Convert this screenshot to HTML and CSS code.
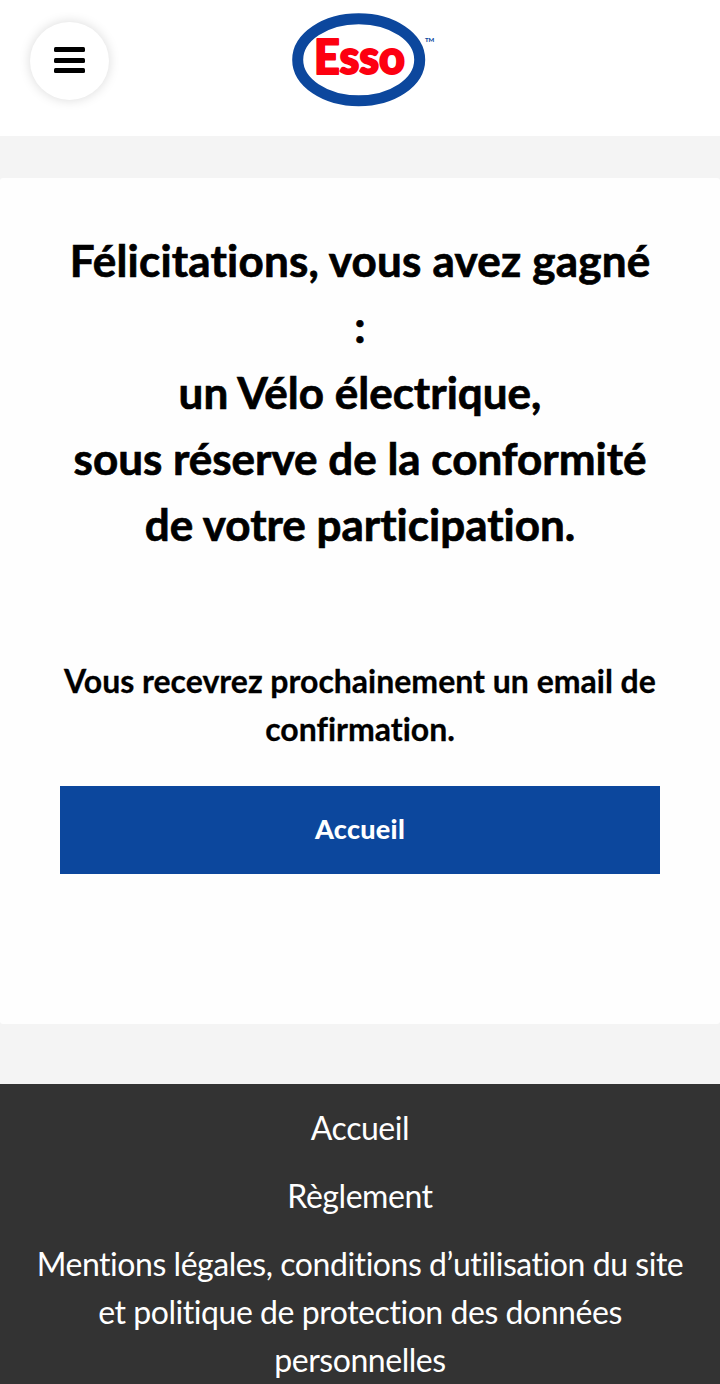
FILE: index.html
```
<!DOCTYPE html>
<html lang="fr">
<head>
    <meta charset="UTF-8">
    <meta name="viewport" content="width=device-width, initial-scale=1.0">
    <title>Esso</title>
    <link rel="stylesheet" href="styles.css">
</head>
<body>

<header class="header">
    <button class="menu-button" aria-label="Menu">
        <span class="bar"></span>
        <span class="bar"></span>
        <span class="bar"></span>
    </button>
    <svg class="logo" width="150" height="100" viewBox="0 0 150 100">
        <ellipse cx="73.7" cy="49.8" rx="61" ry="41" fill="#fff" stroke="#0c479d" stroke-width="11"/>
        <text class="logo-text" x="29" y="63.5" textLength="91" lengthAdjust="spacingAndGlyphs">Esso</text>
        <text class="logo-tm" x="140" y="32">TM</text>
    </svg>
</header>

<main class="content">
    <h1>
        <span class="first-line">Félicitations, vous avez gagné</span><br>
        :<br>
        un Vélo électrique,<br>
        sous réserve de la conformité<br>
        de votre participation.
    </h1>
    <p class="message">Vous recevrez prochainement un email de confirmation.</p>
    <a class="home-button" href="#">Accueil</a>
</main>

<footer class="footer">
    <a href="#">Accueil</a>
    <a href="#">Règlement</a>
    <a href="#">Mentions légales, conditions d’utilisation du site et politique de protection des données personnelles</a>
</footer>

</body>
</html>
```
FILE: styles.css
```
* {
    box-sizing: border-box;
}
body {
    font-family: Lato, "Open Sans", sans-serif;
    font-variant-ligatures: none;
    background-color: #f4f4f4;
    margin: 0;
    padding: 0;
}
.header {
    display: grid;
    grid-template-columns: 1fr 150px 1fr;
    align-items: start;
    height: 136px;
    padding: 10px 30px 0;
    background-color: #fff;
}
.menu-button {
    display: flex;
    flex-direction: column;
    align-items: center;
    justify-content: center;
    gap: 5.5px;
    width: 79px;
    height: 78px;
    margin-top: 12px;
    padding: 0 0 2px;
    border: none;
    border-radius: 50%;
    background-color: #fff;
    box-shadow: 0 0 12px rgba(0, 0, 0, 0.15);
}
.bar {
    width: 31px;
    height: 5px;
    border-radius: 1.5px;
    background-color: #000;
}
.logo-text {
    font-size: 47px;
    font-weight: 900;
    fill: #fd0010;
    stroke: #fd0010;
    stroke-width: 2px;
    stroke-linejoin: round;
}
.logo-tm {
    font-size: 6px;
    font-weight: 900;
    fill: #0c479d;
}
.content {
    height: 846px;
    margin-top: 42px;
    padding: 49px 50px 0;
    border-radius: 3px;
    background-color: #fefefe;
    text-align: center;
}
h1 {
    margin: 0;
    font-size: 44px;
    font-weight: 700;
    line-height: 66px;
    color: #000;
    -webkit-text-stroke: 0.7px #000;
}
.first-line {
    letter-spacing: 0.2px;
}
.message {
    margin: 100px 0 33px;
    padding: 0 10px;
    font-size: 32px;
    font-weight: 700;
    line-height: 48px;
    color: #000;
    -webkit-text-stroke: 0.3px #000;
}
.home-button {
    display: block;
    height: 88px;
    margin: 0 10px;
    background-color: #0c479d;
    color: #fff;
    font-size: 27px;
    font-weight: 900;
    line-height: 86px;
    letter-spacing: 0.3px;
    text-decoration: none;
}
.footer {
    display: flex;
    flex-direction: column;
    gap: 20px;
    height: 300px;
    margin-top: 60px;
    padding: 20px 30px 0;
    background-color: #333;
    text-align: center;
}
.footer a {
    color: #fff;
    font-size: 32px;
    line-height: 48px;
    letter-spacing: -0.45px;
    text-decoration: none;
}
```
